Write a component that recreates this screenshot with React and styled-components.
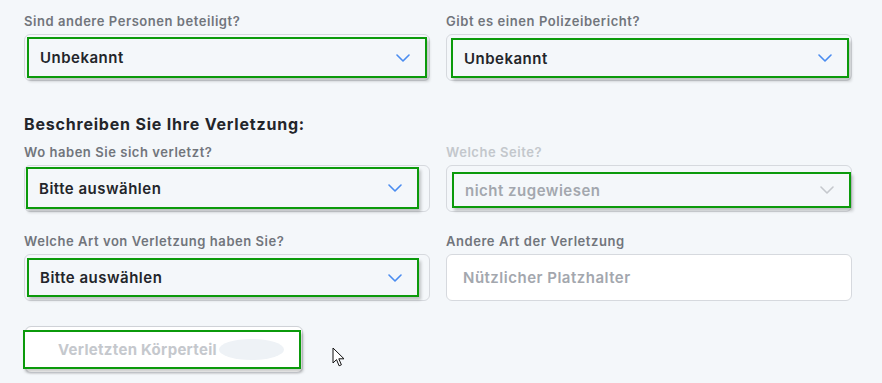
import React from "react";
import styled, { createGlobalStyle } from "styled-components";

const GlobalStyle = createGlobalStyle`
  html, body {
    margin: 0;
    padding: 0;
    background: #f4f7fa;
  }
  body {
    font-family: Inter, "Noto Sans", sans-serif;
    -webkit-font-smoothing: antialiased;
  }
`;

const Page = styled.div`
  position: relative;
  width: 882px;
  height: 383px;
  overflow: hidden;
  box-sizing: border-box;
  padding: 12px 0 0 24px;
`;

const Grid = styled.div`
  display: grid;
  grid-template-columns: 406px 406px;
  column-gap: 16px;
  row-gap: ${(p) => p.$rowGap || 0}px;
`;

const Field = styled.div`
  display: flex;
  flex-direction: column;
`;

const Label = styled.label`
  font-size: 13px;
  line-height: 18px;
  font-weight: 600;
  letter-spacing: 0.55px;
  color: ${(p) => (p.$disabled ? "#c3c7cc" : "#71757c")};
  margin-bottom: 4px;
`;

const Heading = styled.h2`
  margin: 32px 0 8px;
  font-size: 16px;
  line-height: 22px;
  font-weight: 700;
  letter-spacing: 0.8px;
  color: #23252a;
`;

const SelectFrame = styled.div`
  box-sizing: border-box;
  height: 47px;
  border: 1px solid #d6d9de;
  border-radius: 6px;
  background: #f4f7fa;
  display: flex;
  padding: ${(p) => p.$inset};
`;

const SelectBox = styled.div`
  flex: 1;
  display: flex;
  align-items: center;
  justify-content: space-between;
  box-sizing: border-box;
  border: 2px solid #0b9a0b;
  padding: 0 15px 0 11px;
  box-shadow: 2px 3px 3px rgba(0, 0, 0, 0.22);
  font-size: 15px;
  font-weight: 600;
  letter-spacing: 0.5px;
  color: ${(p) => (p.$disabled ? "#a3a7ae" : "#23252a")};
`;

const Chevron = ({ color }) => (
  <svg width="14" height="8" viewBox="0 0 14 8" fill="none">
    <path d="M1 1l6 6 6-6" stroke={color} strokeWidth="1.6" strokeLinecap="round" strokeLinejoin="round" />
  </svg>
);

const TextInput = styled.input`
  box-sizing: border-box;
  height: 47px;
  border: 1px solid #d6d9de;
  border-radius: 6px;
  background: #fff;
  padding: 0 16px;
  font-family: inherit;
  font-size: 15px;
  font-weight: 600;
  letter-spacing: 0.5px;
  outline: none;
  &::placeholder {
    color: #a3a7ae;
  }
`;

const ButtonFrame = styled.div`
  margin-top: 25px;
  box-sizing: border-box;
  width: 278px;
  height: 47px;
  margin-left: 1px;
  border: 1px solid #cfd2d7;
  border-radius: 6px;
  background: #fff;
  box-shadow: 0 1px 2px rgba(0, 0, 0, 0.12);
  padding: 3px 1px 3px 0;
  display: flex;
`;

const Button = styled.button`
  flex: 1;
  margin-left: -3px;
  display: flex;
  align-items: center;
  gap: 2px;
  box-sizing: border-box;
  border: 2px solid #0b9a0b;
  background: #fff;
  padding: 0 0 0 33px;
  box-shadow: 2px 3px 3px rgba(0, 0, 0, 0.2);
  font-family: inherit;
  font-size: 15px;
  font-weight: 700;
  letter-spacing: 0.3px;
  color: #c5c8cd;
`;

const Blob = styled.span`
  display: inline-block;
  width: 65px;
  height: 21px;
  border-radius: 50%;
  background: #eef2f6;
`;

const Cursor = styled.svg`
  position: absolute;
  left: 332px;
  top: 347px;
`;

function Select({ value, inset, disabled }) {
  return (
    <SelectFrame $inset={inset}>
      <SelectBox $disabled={disabled}>
        <span>{value}</span>
        <Chevron color={disabled ? "#c5c8cd" : "#4a8cf0"} />
      </SelectBox>
    </SelectFrame>
  );
}

export default function App() {
  return (
    <>
      <GlobalStyle />
      <Page>
        <Grid>
          <Field>
            <Label>Sind andere Personen beteiligt?</Label>
            <Select value="Unbekannt" inset="2px 2px 2px 2px" />
          </Field>
          <Field>
            <Label>Gibt es einen Polizeibericht?</Label>
            <Select value="Unbekannt" inset="3px 2px 2px 4px" />
          </Field>
        </Grid>
        <Heading>Beschreiben Sie Ihre Verletzung:</Heading>
        <Grid $rowGap={20}>
          <Field>
            <Label>Wo haben Sie sich verletzt?</Label>
            <Select value="Bitte auswählen" inset="1px 10px 2px 1px" />
          </Field>
          <Field>
            <Label $disabled>Welche Seite?</Label>
            <Select value="nicht zugewiesen" inset="6px 0px 3px 5px" disabled />
          </Field>
          <Field>
            <Label>Welche Art von Verletzung haben Sie?</Label>
            <Select value="Bitte auswählen" inset="3px 10px 3px 2px" />
          </Field>
          <Field>
            <Label>Andere Art der Verletzung</Label>
            <TextInput placeholder="Nützlicher Platzhalter" />
          </Field>
        </Grid>
        <ButtonFrame>
          <Button>
            Verletzten Körperteil
            <Blob />
          </Button>
        </ButtonFrame>
        <Cursor width="14" height="21" viewBox="0 0 14 21">
          <path d="M1 1v15l3.5-3.4 2.6 6.2 2.3-1-2.6-6H12z" fill="#fff" stroke="#111" strokeWidth="1" strokeLinejoin="round" />
        </Cursor>
      </Page>
    </>
  );
}
